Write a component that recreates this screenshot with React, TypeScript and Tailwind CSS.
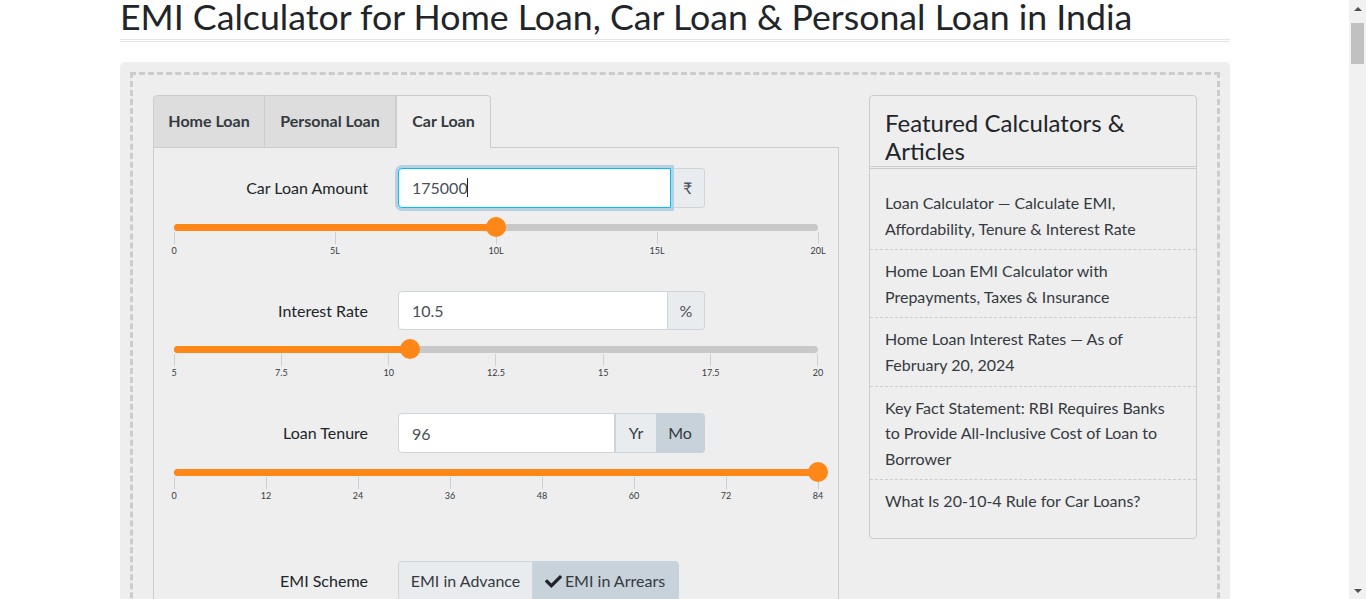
import { FaCheck } from 'react-icons/fa'

const sidebarLinks = [
  'Loan Calculator — Calculate EMI, Affordability, Tenure & Interest Rate',
  'Home Loan EMI Calculator with Prepayments, Taxes & Insurance',
  'Home Loan Interest Rates — As of February 20, 2024',
  'Key Fact Statement: RBI Requires Banks to Provide All-Inclusive Cost of Loan to Borrower',
  'What Is 20-10-4 Rule for Car Loans?',
]

function Slider({ ticks, percent }: { ticks: string[]; percent: number }) {
  return (
    <div className="ml-[20px] w-[644px]">
      <div className="relative h-[7px] rounded-full bg-[#c8c8c8]">
        <div className="h-full rounded-full bg-[#ff8717]" style={{ width: `${percent}%` }} />
        <div
          className="absolute top-[-7px] ml-[-10px] size-5 rounded-full bg-[#ff8717]"
          style={{ left: `${percent}%` }}
        />
      </div>
      <div className="mt-px flex justify-between">
        {ticks.map((t) => (
          <div key={t} className="flex w-0 flex-col items-center">
            <div className="h-[12px] w-px shrink-0 bg-[#ccd0d4]" />
            <span className="text-[9px] leading-[14px] text-[#343a40]">{t}</span>
          </div>
        ))}
      </div>
    </div>
  )
}

function Row({ label, children }: { label: string; children: React.ReactNode }) {
  return (
    <div className="flex items-center">
      <label className="w-[214px] shrink-0 text-right text-[16px] text-[#212529]">{label}</label>
      <div className="ml-[30px] flex">{children}</div>
    </div>
  )
}

export default function App() {
  return (
    <div className="flex h-[599px] overflow-hidden bg-white font-['Lato','Open_Sans',sans-serif] text-[#212529]">
      <div className="min-w-0 flex-1">
        <div className="ml-[120px] w-[1110px]">
          <h1 className="h-[39px] whitespace-nowrap text-[35.7px] leading-[34px] font-normal text-[#212529]">
            EMI Calculator for Home Loan, Car Loan & Personal Loan in India
          </h1>
          <div className="h-[3px] border-y border-[#e5e5e5]" />

          <div className="mt-[20px] h-[600px] rounded-[5px] bg-[#eeeeee] p-[10px]">
            <div className="flex h-full gap-[30px] border-[3px] border-dashed border-[#cccccc] pt-[20px] pl-[20px]">
              {/* Calculator */}
              <div className="w-[686px] shrink-0">
                <div className="flex h-[53px] text-[16px] font-bold text-[#343a40]">
                  <div className="flex w-[112px] items-center justify-center rounded-tl-[4px] border border-[#cccccc] bg-[#dddddd] pb-[2px]">Home Loan</div>
                  <div className="flex w-[131px] items-center justify-center border-y border-r border-[#cccccc] bg-[#dddddd] pb-[2px]">Personal Loan</div>
                  <div className="z-10 flex h-[53px] w-[95px] items-center justify-center rounded-tr-[4px] border-x border-t border-[#cccccc] bg-[#eeeeee] pb-[2px]">Car Loan</div>
                </div>
                <div className="mt-[-1px] h-[600px] border border-[#cccccc] pt-[20px]">
                  <Row label="Car Loan Amount">
                    <span className="relative z-10 flex">
                      <input
                        readOnly
                        value="175000"
                        className="h-[40px] w-[273px] rounded-l-[4px] border border-[#00bfff] bg-white px-[13px] pb-[2px] text-[16px] text-[#495057] shadow-[0_0_0_3px_#b8d1e0] outline-none"
                      />
                      <span className="absolute top-[10px] left-[69px] h-[19px] w-px bg-[#212529]" />
                    </span>
                    <span className="flex h-[40px] w-[34px] items-center justify-center rounded-r-[4px] border border-l-0 border-[#ced4da] bg-[#e9ecef] text-[16px] text-[#495057]">₹</span>
                  </Row>
                  <div className="mt-[16px]">
                    <Slider ticks={['0', '5L', '10L', '15L', '20L']} percent={50} />
                  </div>

                  <div className="mt-[33px]">
                    <Row label="Interest Rate">
                      <input
                        readOnly
                        value="10.5"
                        className="h-[39px] w-[270px] rounded-l-[4px] border border-[#ced4da] bg-white px-[13px] text-[16px] text-[#495057] outline-none"
                      />
                      <span className="flex h-[39px] w-[37px] items-center justify-center rounded-r-[4px] border border-l-0 border-[#ced4da] bg-[#e9ecef] text-[16px] text-[#495057]">%</span>
                    </Row>
                  </div>
                  <div className="mt-[16px]">
                    <Slider ticks={['5', '7.5', '10', '12.5', '15', '17.5', '20']} percent={36.67} />
                  </div>

                  <div className="mt-[33px]">
                    <Row label="Loan Tenure">
                      <input
                        readOnly
                        value="96"
                        className="h-[40px] w-[217px] rounded-l-[4px] border border-[#ced4da] bg-white px-[13px] text-[16px] text-[#495057] outline-none"
                      />
                      <span className="flex h-[40px] w-[41px] items-center justify-center border-y border-l border-[#ced4da] bg-[#e9ecef] text-[16px] text-[#343a40]">Yr</span>
                      <span className="flex h-[40px] w-[49px] items-center justify-center rounded-r-[4px] border-y border-r border-[#c8d2da] bg-[#c8d2da] text-[16px] text-[#343a40]">Mo</span>
                    </Row>
                  </div>
                  <div className="mt-[16px]">
                    <Slider ticks={['0', '12', '24', '36', '48', '60', '72', '84']} percent={100} />
                  </div>

                  <div className="mt-[58px]">
                    <Row label="EMI Scheme">
                      <span className="flex h-[40px] w-[135px] items-center justify-center rounded-l-[4px] border border-[#ced4da] bg-[#e9ecef] text-[16px] text-[#343a40]">EMI in Advance</span>
                      <span className="flex h-[40px] w-[146px] items-center justify-center gap-[3px] rounded-r-[4px] border border-[#c8d2da] bg-[#c8d2da] pr-[2px] text-[16px] text-[#343a40]">
                        <FaCheck size={17} className="text-[#212529]" />
                        EMI in Arrears
                      </span>
                    </Row>
                  </div>
                </div>
              </div>

              {/* Sidebar */}
              <div className="h-[444px] w-[328px] shrink-0 rounded-[4px] border border-[#cccccc]">
                <h2 className="px-[15px] pt-[13px] pb-[1px] text-[24px] leading-[28px] font-normal text-[#212529]">
                  Featured Calculators & Articles
                </h2>
                <div className="h-[3px] border-y border-[#cccccc]" />
                <ul className="mt-[13px] text-[16px] leading-[25.6px] text-[#343a40]">
                  {sidebarLinks.map((item, i) => (
                    <li
                      key={item}
                      className={`px-[15px] py-[8px] ${i < sidebarLinks.length - 1 ? 'border-b border-dashed border-[#cccccc]' : ''}`}
                    >
                      {item}
                    </li>
                  ))}
                </ul>
              </div>
            </div>
          </div>
        </div>
      </div>

      {/* Scrollbar */}
      <div className="flex w-[17px] shrink-0 flex-col items-center bg-[#f1f1f1]">
        <div className="flex h-[17px] items-center justify-center">
          <div className="h-0 w-0 border-x-[4px] border-b-[4px] border-x-transparent border-b-[#505050]" />
        </div>
        <div className="mt-[6px] h-[41px] w-[13px] bg-[#c1c1c1]" />
        <div className="flex-1" />
        <div className="flex h-[17px] items-center justify-center">
          <div className="h-0 w-0 border-x-[4px] border-t-[4px] border-x-transparent border-t-[#505050]" />
        </div>
      </div>
    </div>
  )
}
